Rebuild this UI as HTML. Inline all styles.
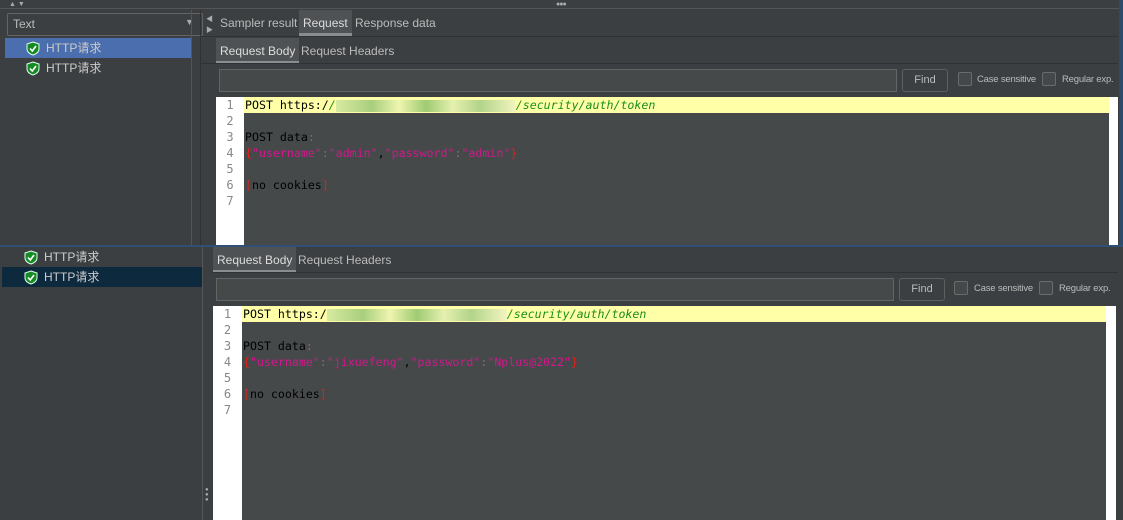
<!DOCTYPE html><html><head><meta charset="utf-8"><style>
*{margin:0;padding:0;box-sizing:border-box}
body{width:1123px;height:520px;background:#3c3f41;position:relative;overflow:hidden;font-family:"Liberation Sans","Noto Sans CJK SC",sans-serif;font-size:12px;color:#bbbbbb}
.a{position:absolute}
.mono{font-family:"DejaVu Sans Mono","Liberation Mono",monospace;font-size:11.6px}
.tab{position:absolute;height:26px;line-height:26px;padding:0 4px;color:#bbb;font-size:12px}
.sel{background:#4e5254;border-bottom:3px solid #8a8d8f;color:#ddd}
.field{position:absolute;border:1px solid #646464;background:#45494a;height:23px}
.btn{position:absolute;border:1px solid #5e6060;border-radius:3px;background:#3c3f41;height:23px;line-height:21px;text-align:center;color:#bbb;font-size:11px}
.cb{position:absolute;width:14px;height:14px;border:1px solid #6b6b6b;border-radius:2px;background:#43494a}
.lbl{position:absolute;font-size:9.5px;color:#bbb;letter-spacing:-0.2px}
.gut{position:absolute;background:#fff;color:#999}
.gut div{height:16px;line-height:16px;text-align:center;font-family:"DejaVu Sans Mono",monospace;font-size:12px;color:#888}
.code{position:absolute;background:#45494a}
.code div{height:16px;line-height:16px;white-space:pre;padding-left:1px}
.hl{background:#ffffa8;color:#000}
.g{color:#1a8f1a;font-style:italic}
.r{color:#e0201c}.m{color:#d1188c}.k{color:#000}
.blur{display:inline-block;width:180px;height:12px;vertical-align:middle;background:linear-gradient(90deg,#d8eaa0,#a8cf7d 20%,#eef5b0 35%,#9fcb72 50%,#e5f0b0 65%,#b2d489 80%,#f2f5c0)}
.tree{position:absolute;height:20px;line-height:20px;color:#ccc;font-size:12px}
.sh{display:inline-block;vertical-align:middle;margin-right:6px}
</style></head><body>
<div class="a" style="left:0;top:0;width:1123px;height:9px;background:#3c3f41;border-bottom:1px solid #555"></div>
<div class="a" style="left:9px;top:1px;font-size:7px;color:#aaa">▲ ▼</div>
<div class="a" style="left:556px;top:1px;font-size:7px;color:#aaa;letter-spacing:-1px">●●●</div>
<div class="a" style="left:7px;top:13px;width:196px;height:23px;border:1px solid #646464;border-radius:2px;background:#3c3f41"></div>
<div class="a" style="left:13px;top:17px;color:#bbb">Text</div>
<div class="a" style="left:185px;top:17px;color:#aaa;font-size:9px">▼</div>
<div class="a" style="left:5px;top:38px;width:186px;height:20px;background:#4b6eaf"></div>
<div class="tree" style="left:26px;top:38px"><svg class="sh" width="14" height="15" viewBox="0 0 14 15"><path d="M7 1L13 3V8C13 11 10 13 7 14C4 13 1 11 1 8V3Z" fill="#168a24" stroke="#dfe" stroke-width="1"/><path d="M4 7.5L6.3 10L10 5" stroke="#fff" stroke-width="1.6" fill="none"/></svg>HTTP请求</div>
<div class="tree" style="left:26px;top:58px"><svg class="sh" width="14" height="15" viewBox="0 0 14 15"><path d="M7 1L13 3V8C13 11 10 13 7 14C4 13 1 11 1 8V3Z" fill="#168a24" stroke="#dfe" stroke-width="1"/><path d="M4 7.5L6.3 10L10 5" stroke="#fff" stroke-width="1.6" fill="none"/></svg>HTTP请求</div>
<div class="a" style="left:191px;top:10px;width:1px;height:236px;background:#555"></div>
<div class="a" style="left:206px;top:14px;font-size:7px;color:#aaa;line-height:11px">◀<br>▶</div>
<div class="a" style="left:200px;top:10px;width:1px;height:236px;background:#2f3133"></div>
<div class="tab" style="left:216px;top:10px">Sampler result</div>
<div class="tab sel" style="left:299px;top:10px">Request</div>
<div class="tab" style="left:351px;top:10px">Response data</div>
<div class="a" style="left:200px;top:36px;width:918px;height:1px;background:#2f3133"></div>
<div class="tab sel" style="left:216px;top:38px">Request Body</div>
<div class="tab" style="left:297px;top:38px">Request Headers</div>
<div class="a" style="left:200px;top:63px;width:918px;height:1px;background:#2f3133"></div>
<div class="field" style="left:219px;top:69px;width:678px"></div>
<div class="btn" style="left:902px;top:69px;width:46px">Find</div>
<div class="cb" style="left:958px;top:72px"></div><div class="lbl" style="left:977px;top:74px">Case sensitive</div>
<div class="cb" style="left:1042px;top:72px"></div><div class="lbl" style="left:1062px;top:74px">Regular exp.</div>
<div class="gut" style="left:216px;top:97px;width:28px;height:148px"><div>1</div><div>2</div><div>3</div><div>4</div><div>5</div><div>6</div><div>7</div></div>
<div class="code mono" style="left:244px;top:97px;width:865px;height:148px">
<div class="hl">POST https:/<span class="g">/</span><span class="blur"></span><span class="g">/security/auth/token</span></div>
<div></div>
<div class="k">POST data<span style="color:#866">:</span></div>
<div><span class="r">{</span><span class="m">"username"</span><span style="color:#866">:</span><span class="m">"admin"</span><span class="k">,</span><span class="m">"password"</span><span style="color:#866">:</span><span class="m">"admin"</span><span class="r">}</span></div>
<div></div>
<div><span class="r">[</span><span class="k">no cookies</span><span class="r">]</span></div>
<div></div></div>
<div class="a" style="left:1109px;top:97px;width:9px;height:148px;background:#fff"></div>
<div class="a" style="left:1119px;top:0;width:4px;height:246px;background:#2d4a6b"></div>
<div class="a" style="left:0;top:245px;width:1123px;height:2px;background:#2f4f73"></div>
<div class="a" style="left:2px;top:267px;width:200px;height:20px;background:#0d293e"></div>
<div class="tree" style="left:24px;top:247px"><svg class="sh" width="14" height="15" viewBox="0 0 14 15"><path d="M7 1L13 3V8C13 11 10 13 7 14C4 13 1 11 1 8V3Z" fill="#168a24" stroke="#dfe" stroke-width="1"/><path d="M4 7.5L6.3 10L10 5" stroke="#fff" stroke-width="1.6" fill="none"/></svg>HTTP请求</div>
<div class="tree" style="left:24px;top:267px"><svg class="sh" width="14" height="15" viewBox="0 0 14 15"><path d="M7 1L13 3V8C13 11 10 13 7 14C4 13 1 11 1 8V3Z" fill="#168a24" stroke="#dfe" stroke-width="1"/><path d="M4 7.5L6.3 10L10 5" stroke="#fff" stroke-width="1.6" fill="none"/></svg>HTTP请求</div>
<div class="a" style="left:202px;top:247px;width:1px;height:273px;background:#555"></div>
<div class="a" style="left:205px;top:488px;font-size:6px;color:#aaa;line-height:5px">●<br>●<br>●</div>
<div class="tab sel" style="left:213px;top:247px">Request Body</div>
<div class="tab" style="left:294px;top:247px">Request Headers</div>
<div class="a" style="left:212px;top:272px;width:906px;height:1px;background:#2f3133"></div>
<div class="field" style="left:216px;top:278px;width:678px"></div>
<div class="btn" style="left:899px;top:278px;width:46px">Find</div>
<div class="cb" style="left:954px;top:281px"></div><div class="lbl" style="left:974px;top:283px">Case sensitive</div>
<div class="cb" style="left:1039px;top:281px"></div><div class="lbl" style="left:1059px;top:283px">Regular exp.</div>
<div class="gut" style="left:213px;top:306px;width:29px;height:214px"><div>1</div><div>2</div><div>3</div><div>4</div><div>5</div><div>6</div><div>7</div></div>
<div class="code mono" style="left:242px;top:306px;width:864px;height:214px">
<div class="hl">POST https:/<span class="blur"></span><span class="g">/security/auth/token</span></div>
<div></div>
<div class="k">POST data<span style="color:#866">:</span></div>
<div><span class="r">{</span><span class="m">"username"</span><span style="color:#866">:</span><span class="m">"jixuefeng"</span><span class="k">,</span><span class="m">"password"</span><span style="color:#866">:</span><span class="m">"Nplus@2022"</span><span class="r">}</span></div>
<div></div>
<div><span class="r">[</span><span class="k">no cookies</span><span class="r">]</span></div>
<div></div></div>
<div class="a" style="left:1106px;top:306px;width:10px;height:214px;background:#fff"></div>
</body></html>
